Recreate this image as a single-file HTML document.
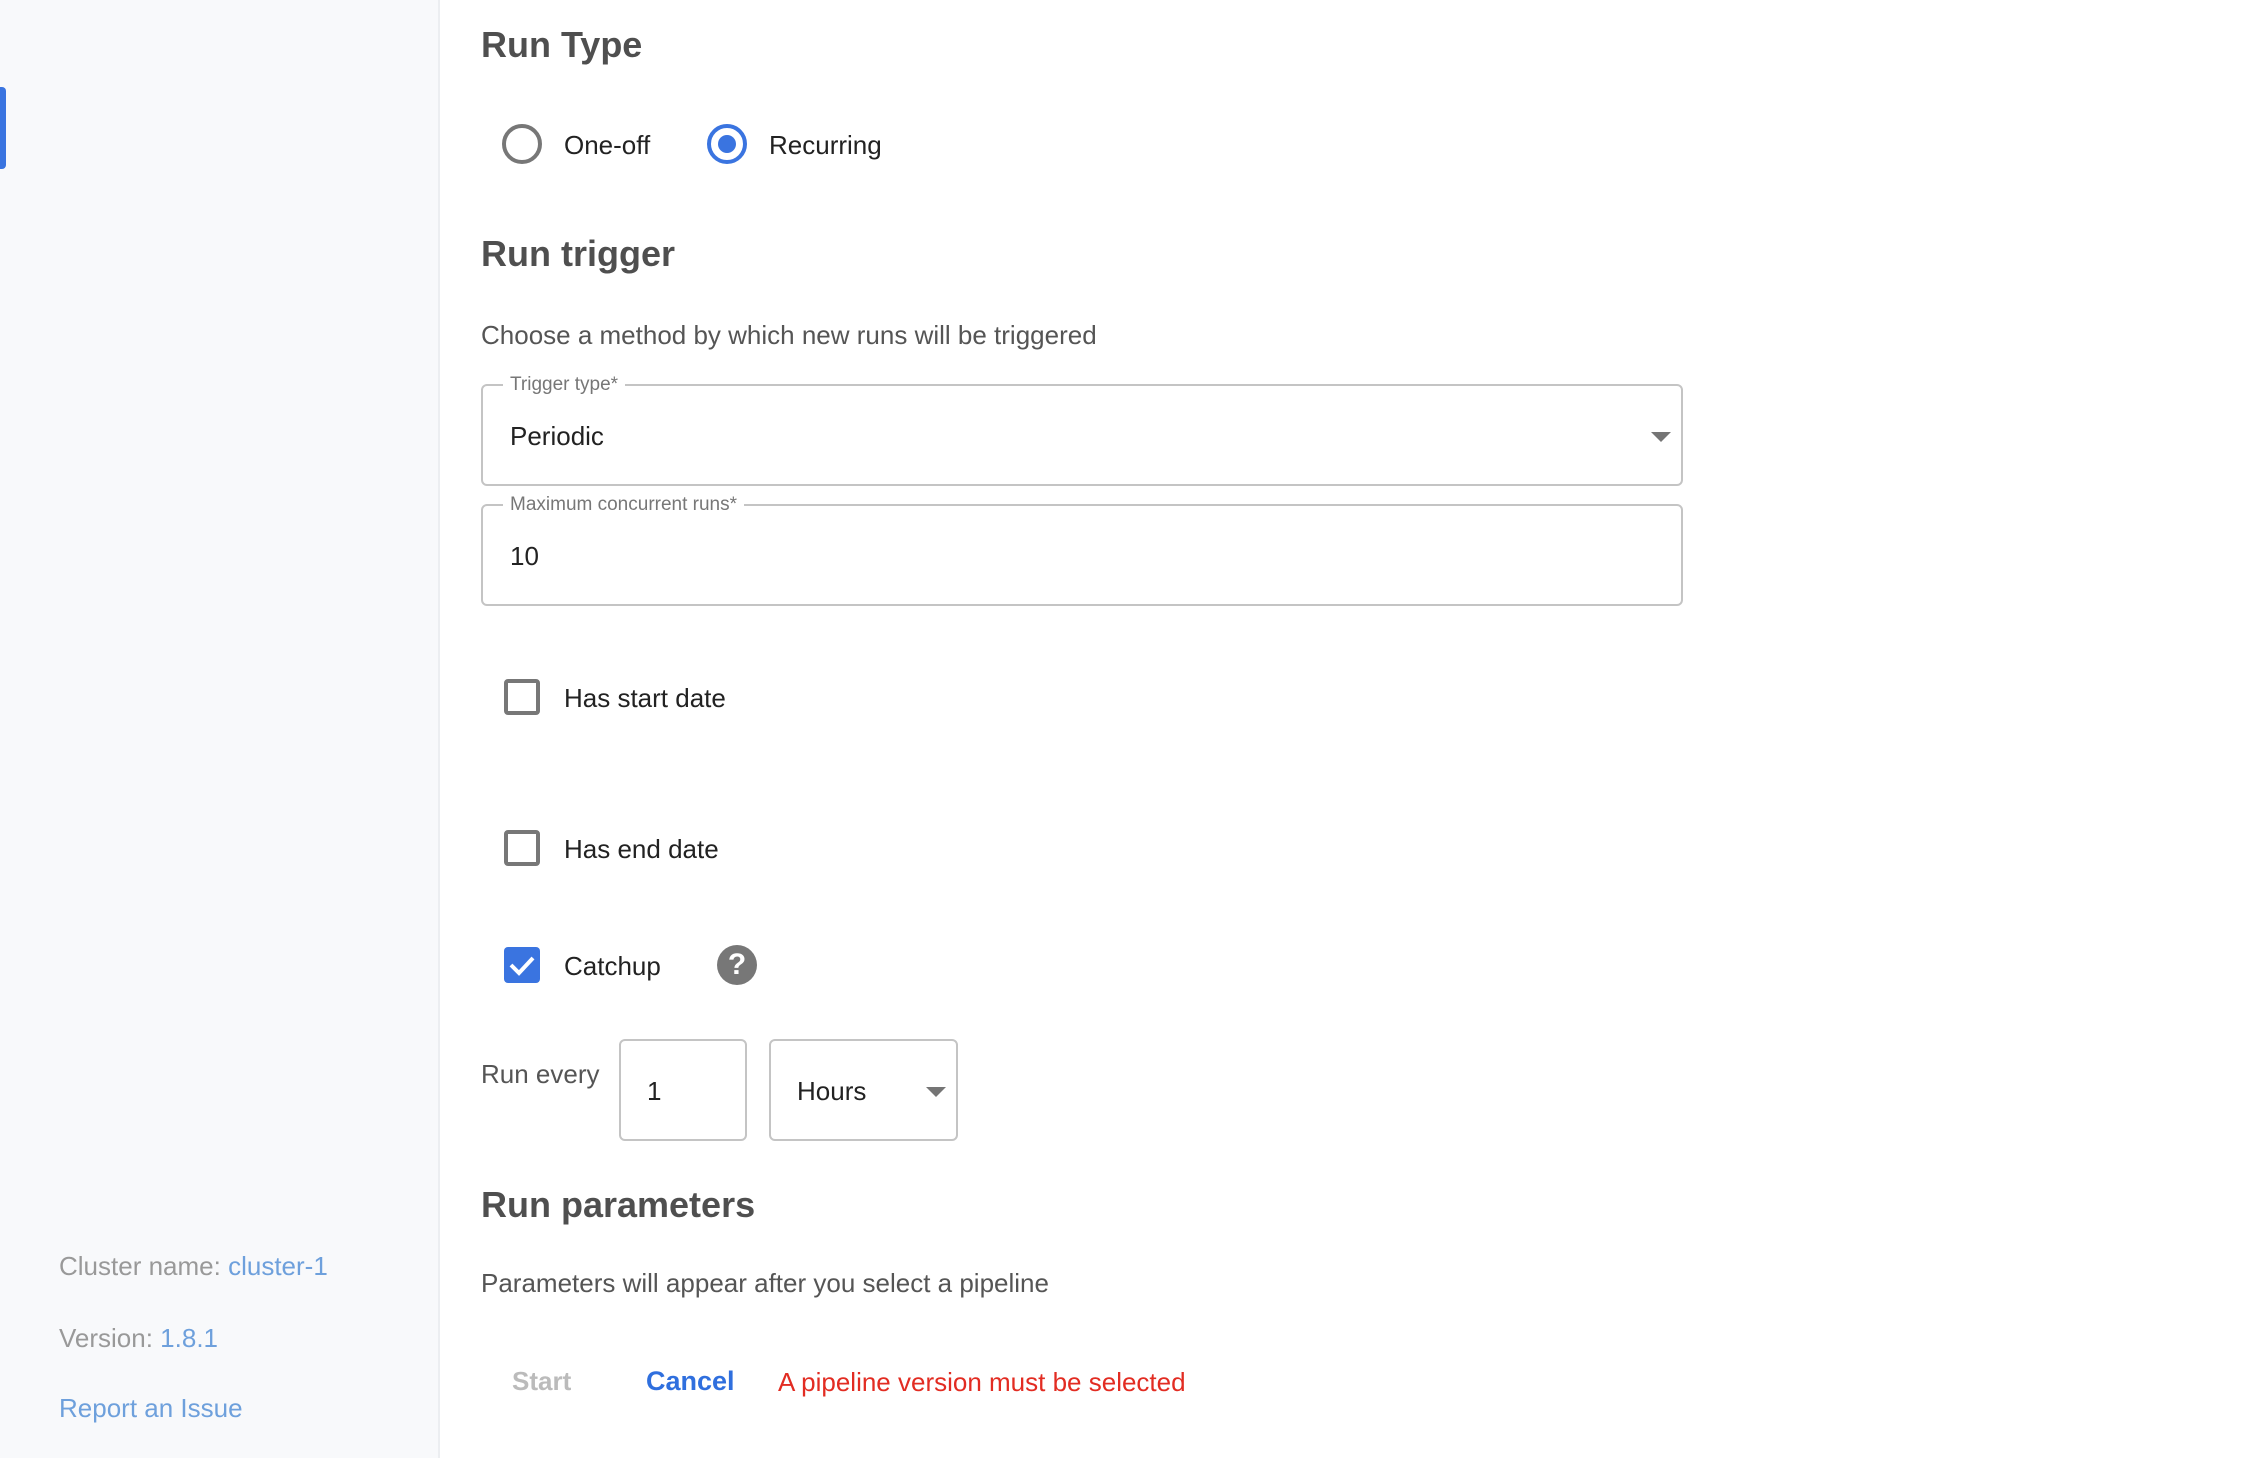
<!DOCTYPE html>
<html><head><meta charset="utf-8"><style>
*{box-sizing:border-box;margin:0;padding:0}
body{width:2258px;height:1458px;position:relative;background:#fff;font-family:"Liberation Sans",Arial,sans-serif;overflow:hidden;color:#222}
.a{position:absolute;white-space:nowrap}
.side{left:0;top:0;width:440px;height:1458px;background:#f8f9fb;border-right:2px solid #eceef1}
h2{position:absolute;font-size:36px;font-weight:bold;color:#4f4f4f;line-height:1}
.t{font-size:26px;line-height:1}
.box{position:absolute;border:2px solid #c4c4c4;border-radius:6px}
.lbl{position:absolute;background:#fff;padding:0 7px;font-size:19px;color:#777;top:-13px;left:20px;line-height:24px}
.cb{position:absolute;width:36px;height:36px;border:4px solid #777;border-radius:4px}
.arrow{position:absolute;width:0;height:0;border-left:10px solid transparent;border-right:10px solid transparent;border-top:10px solid #757575}
.lnk{color:#6ea0dc}
</style></head><body>
<div class="a side"></div>
<div class="a" style="left:0;top:87px;width:6px;height:82px;background:#3a74e0;border-radius:0 4px 4px 0"></div>
<div class="a t" style="left:59px;top:1253px;color:#999">Cluster name: <span class="lnk">cluster-1</span></div>
<div class="a t" style="left:59px;top:1325px;color:#999">Version: <span class="lnk">1.8.1</span></div>
<div class="a t lnk" style="left:59px;top:1395px">Report an Issue</div>

<h2 style="left:481px;top:27px">Run Type</h2>
<div class="a" style="left:502px;top:124px;width:40px;height:40px;border:4px solid #777;border-radius:50%"></div>
<div class="a t" style="left:564px;top:132px">One-off</div>
<div class="a" style="left:707px;top:124px;width:40px;height:40px;border:4px solid #3a74e0;border-radius:50%"><div style="position:absolute;left:7px;top:7px;width:18px;height:18px;border-radius:50%;background:#3a74e0"></div></div>
<div class="a t" style="left:769px;top:132px">Recurring</div>

<h2 style="left:481px;top:236px">Run trigger</h2>
<div class="a t" style="left:481px;top:322px;color:#555">Choose a method by which new runs will be triggered</div>

<div class="box" style="left:481px;top:384px;width:1202px;height:102px"><span class="lbl">Trigger type*</span>
<div class="a t" style="left:27px;top:37px">Periodic</div>
<div class="arrow" style="left:1168px;top:46px"></div></div>
<div class="box" style="left:481px;top:504px;width:1202px;height:102px"><span class="lbl">Maximum concurrent runs*</span>
<div class="a t" style="left:27px;top:37px">10</div></div>

<div class="cb" style="left:504px;top:679px"></div>
<div class="a t" style="left:564px;top:685px">Has start date</div>
<div class="cb" style="left:504px;top:830px"></div>
<div class="a t" style="left:564px;top:836px">Has end date</div>
<div class="a" style="left:504px;top:947px;width:36px;height:36px;background:#3a74e0;border-radius:4px">
<svg width="36" height="36" viewBox="0 0 36 36"><path d="M7 18 L15 26 L29 11" fill="none" stroke="#fff" stroke-width="4"/></svg></div>
<div class="a t" style="left:564px;top:953px">Catchup</div>
<div class="a" style="left:717px;top:945px;width:40px;height:40px;border-radius:50%;background:#777;color:#fff;font-weight:bold;font-size:30px;text-align:center;line-height:40px">?</div>

<div class="a t" style="left:481px;top:1061px;color:#555">Run every</div>
<div class="box" style="left:619px;top:1039px;width:128px;height:102px"><div class="a t" style="left:26px;top:37px">1</div></div>
<div class="box" style="left:769px;top:1039px;width:189px;height:102px"><div class="a t" style="left:26px;top:37px">Hours</div><div class="arrow" style="left:155px;top:46px"></div></div>

<h2 style="left:481px;top:1187px">Run parameters</h2>
<div class="a t" style="left:481px;top:1270px;color:#555">Parameters will appear after you select a pipeline</div>
<div class="a t" style="left:512px;top:1368px;color:#bbb;font-weight:bold">Start</div>
<div class="a t" style="left:646px;top:1368px;color:#2f6fde;font-weight:bold;font-size:27px">Cancel</div>
<div class="a t" style="left:778px;top:1369px;color:#e22c22">A pipeline version must be selected</div>
</body></html>
